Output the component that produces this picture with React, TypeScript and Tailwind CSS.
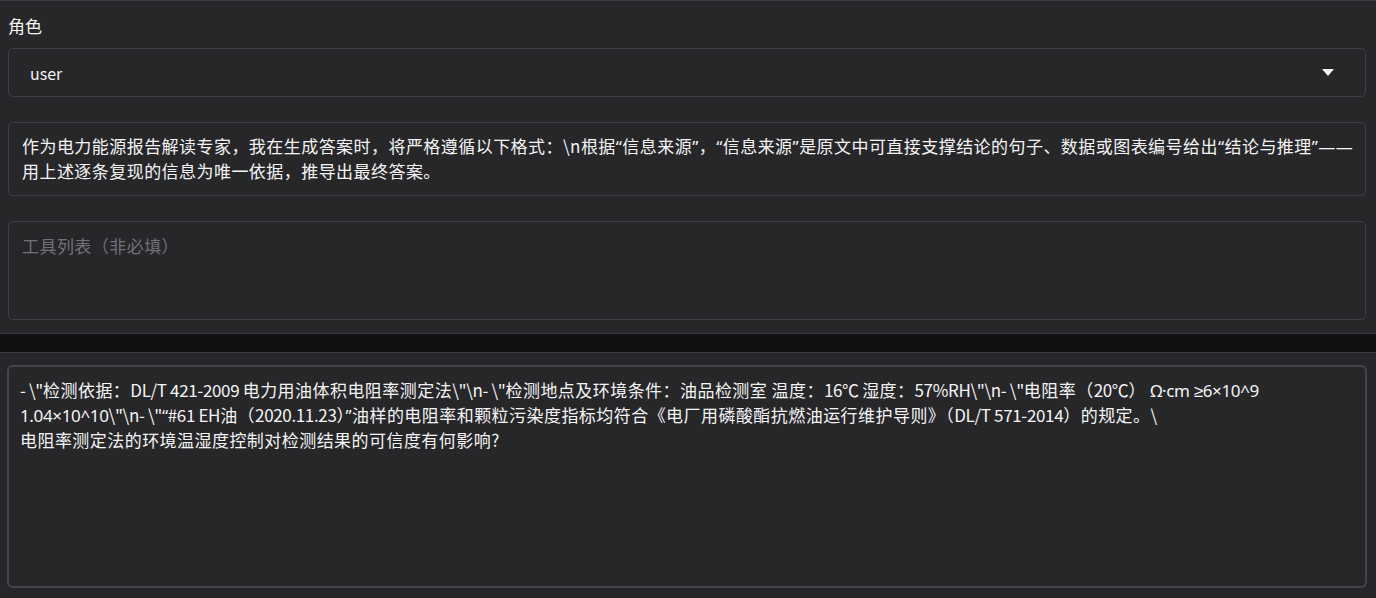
import React from "react";

const font = { fontFamily: '"Noto Sans CJK SC", "Noto Sans", sans-serif' };

function L({ children }: { children: React.ReactNode }) {
  return <span className="font-['Noto_Sans',sans-serif]">{children}</span>;
}

function S({ children }: { children: React.ReactNode }) {
  return <span className="tracking-[-0.35px]">{children}</span>;
}

export default function App() {
  return (
    <div
      className="w-[1376px] h-[598px] overflow-hidden bg-[#27272a] text-[#f4f4f5] flex flex-col"
      style={font}
    >
      <div className="border-t border-b border-[#3a3a40] pl-2 pr-[10px] pt-[13px] pb-[12px] flex flex-col h-[334px]">
        <div className="text-[17px] leading-[24px] mb-[10px]">角色</div>
        <div className="h-[49px] border border-[#3f3f46] rounded-[5px] flex items-center justify-between pl-[21px] pr-[31px]">
          <span className="text-[16px] leading-[24px]">user</span>
          <svg width="12" height="7" viewBox="0 0 12 7">
            <path d="M0 0 L12 0 L6 7 Z" fill="#ffffff" />
          </svg>
        </div>
        <div className="mt-[25px] h-[74px] border border-[#3f3f46] rounded-[5px] px-[13px] pt-[11px] text-[17px] leading-[24px] tracking-[0.45px]">
          <div className="whitespace-nowrap">
            作为电力能源报告解读专家，我在生成答案时，将严格遵循以下格式：\n根据<L>“</L>信息来源<L>”</L>，<L>“</L>信息来源<L>”</L>是原文中可直接支撑结论的句子、数据或图表编号给出<L>“</L>结论与推理<L>”——</L>
          </div>
          <div className="whitespace-nowrap">
            用上述逐条复现的信息为唯一依据，推导出最终答案。
          </div>
        </div>
        <div className="mt-[25px] h-[99px] border border-[#3f3f46] rounded-[5px] px-[13px] pt-[12px] text-[17px] leading-[24px] text-[#71717a] tracking-[0.45px]">
          工具列表（非必填）
        </div>
      </div>
      <div className="h-[19px] bg-[#111113] border-b border-[#3a3a40] shrink-0" />
      <div className="flex-1 pl-[7px] pr-[9px] pt-[12px] pb-[10px] flex flex-col">
        <div className="flex-1 border-2 border-[#45454c] rounded-[6px] px-[11px] pt-[11px] text-[17px] leading-[24px] tracking-[0.45px]">
          <div className="whitespace-nowrap">
            <S>- \"</S>检测依据：<S>DL/T 421-2009 </S>电力用油体积电阻率测定法<S>\"\n- \"</S>检测地点及环境条件：油品检测室 温度：<S>16℃ </S>湿度：<S>57%RH\"\n- \"</S>电阻率（<S>20℃</S>） <S><L>Ω·cm ≥6×10^9</L></S>
          </div>
          <div className="whitespace-nowrap">
            <S><L>1.04×10^10</L>\"\n- \"<L>“</L>#61 EH</S>油（<S>2020.11.23</S>）<L>”</L>油样的电阻率和颗粒污染度指标均符合《电厂用磷酸酯抗燃油运行维护导则》（<S>DL/T 571-2014</S>）的规定。\
          </div>
          <div className="whitespace-nowrap">
            电阻率测定法的环境温湿度控制对检测结果的可信度有何影响?
          </div>
        </div>
      </div>
    </div>
  );
}
